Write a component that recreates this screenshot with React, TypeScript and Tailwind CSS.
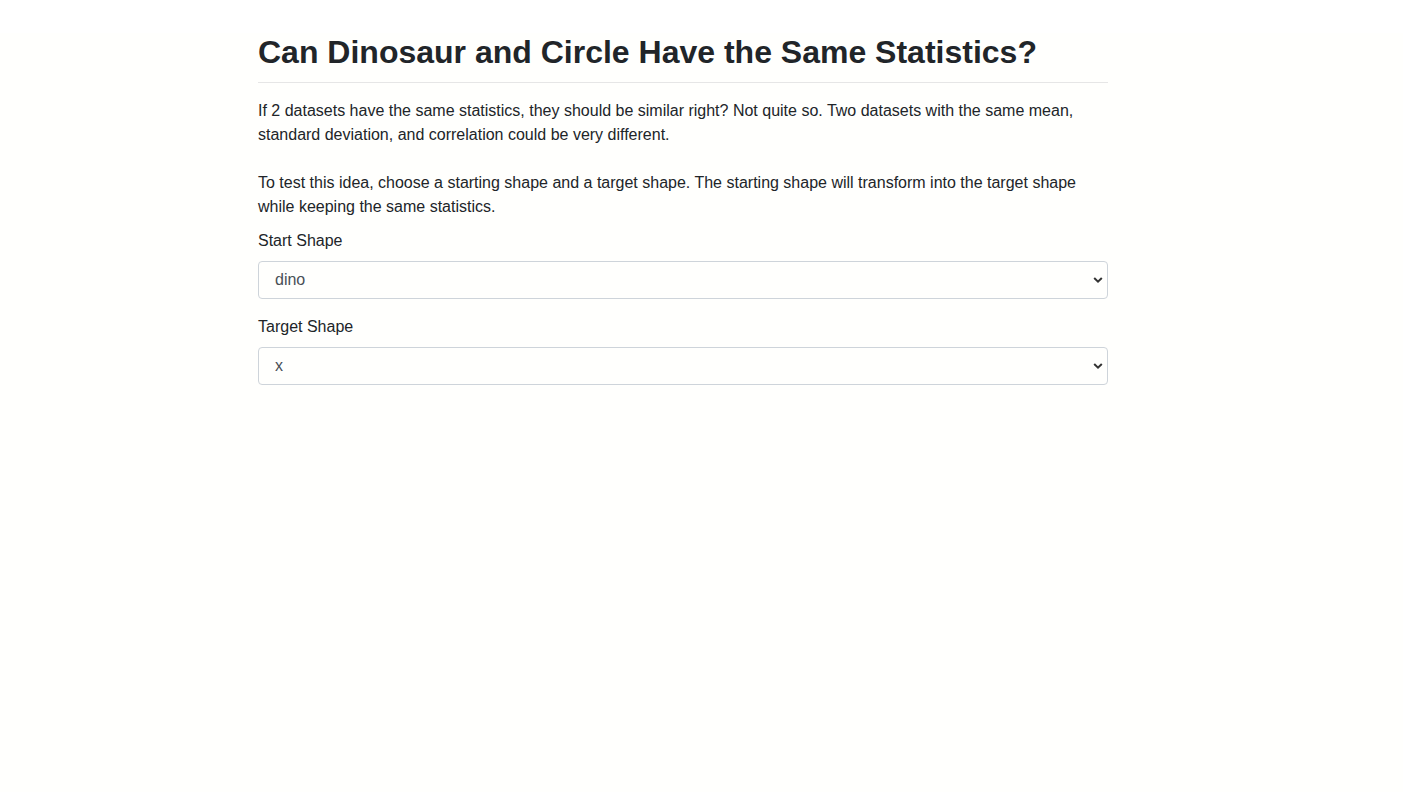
import { useState } from "react";

const shapes = ["dino", "circle", "x", "star", "bullseye", "h_lines", "v_lines", "wide_lines", "high_lines", "slant_up", "slant_down", "away", "dots"];

function ShapeSelect({
  id,
  label,
  value,
  onChange
}: {
  id: string;
  label: string;
  value: string;
  onChange: (value: string) => void;
}) {
  return (
    <div>
      <label htmlFor={id} className="block text-base leading-6">
        {label}
      </label>
      <div className="relative mt-2">
        <select
          id={id}
          value={value}
          onChange={(e) => onChange(e.target.value)}
          className="block h-[38px] w-full appearance-none rounded-[4px] border border-[#ced4da] bg-[#fffffd] pl-4 pr-8 text-base text-[#495057] outline-none"
        >
          {shapes.map((shape) => (
            <option key={shape} value={shape}>
              {shape}
            </option>
          ))}
        </select>
        <svg
          className="pointer-events-none absolute right-[5px] top-1/2 -translate-y-1/2"
          width="10"
          height="7"
          viewBox="0 0 10 7"
          fill="none"
        >
          <path d="M1.2 1.5 5 5.2 8.8 1.5" stroke="#333" strokeWidth="2" />
        </svg>
      </div>
    </div>
  );
}

export default function App() {
  const [start, setStart] = useState("dino");
  const [target, setTarget] = useState("x");

  return (
    <div className="min-h-screen bg-[#fffffd] font-['Liberation_Sans',Arial,sans-serif] text-[#212529]">
      <div className="ml-[258px] w-[850px]">
        <h1 className="mt-[33px] border-b border-[#e6e6e6] pb-[11px] text-[32px] font-bold leading-[38px]">
          Can Dinosaur and Circle Have the Same Statistics?
        </h1>
        <p className="mt-4 text-base leading-6">
          If 2 datasets have the same statistics, they should be similar right? Not quite so. Two datasets with the same
          mean, standard deviation, and correlation could be very different.
        </p>
        <p className="mt-6 text-base leading-6">
          To test this idea, choose a starting shape and a target shape. The starting shape will transform into the target
          shape while keeping the same statistics.
        </p>
        <div className="mt-[10px] flex flex-col gap-4">
          <ShapeSelect id="start-shape" label="Start Shape" value={start} onChange={setStart} />
          <ShapeSelect id="target-shape" label="Target Shape" value={target} onChange={setTarget} />
        </div>
      </div>
    </div>
  );
}
